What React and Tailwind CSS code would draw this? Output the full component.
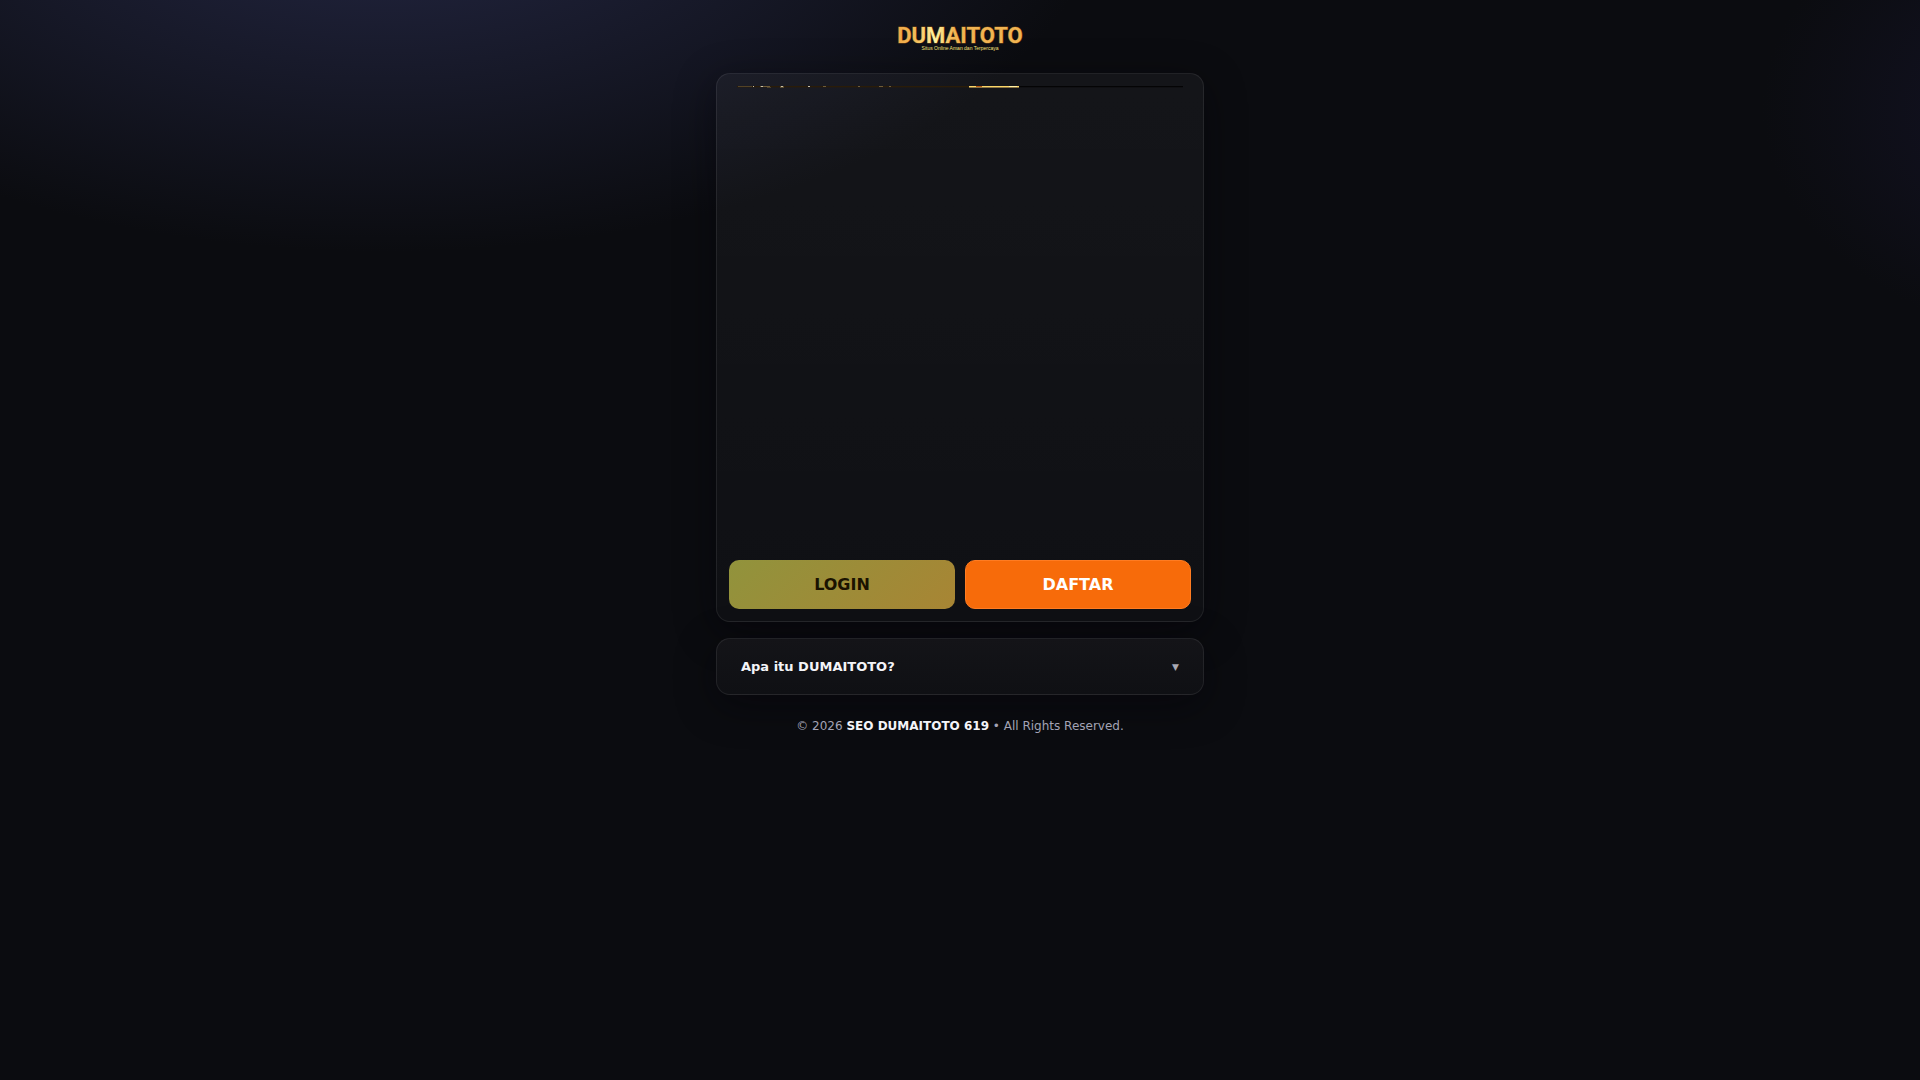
function Logo() {
  return (
    <svg viewBox="0 0 140 28" className="h-7 w-[140px]" role="img" aria-label="DUMAITOTO">
      <defs>
        <linearGradient id="gold" x1="0" x2="1" y1="0" y2="0">
          <stop offset="0" stopColor="#f0a848" />
          <stop offset="0.15" stopColor="#f3bd5a" />
          <stop offset="0.3" stopColor="#fff3a0" />
          <stop offset="0.45" stopColor="#f0b452" />
          <stop offset="1" stopColor="#f0b452" />
        </linearGradient>
      </defs>
      <text x="70" y="19" textAnchor="middle" fontFamily="Roboto, sans-serif" fontWeight="700" fontSize="22" fill="url(#gold)" stroke="#6b4213" strokeWidth="1" paintOrder="stroke">DUMAITOTO</text>
      <text x="70" y="26" textAnchor="middle" fontFamily="Liberation Sans, sans-serif" fontSize="5" fill="#f6e27a">Situs Online Aman dan Terpercaya</text>
    </svg>
  );
}

function BannerStrip() {
  return (
    <div className="aspect-square w-full px-2" aria-hidden="true">
      <svg viewBox="0 0 446 2" preserveAspectRatio="none" className="h-[2px] w-full">
        <rect width="234" height="1" fill="#2a1c08" />
        <rect width="234" y="1" height="1" fill="#2a1c08" opacity="0.35" />
        <rect x="234" width="212" height="1" fill="#040405" />
        <rect x="234" y="1" width="212" height="1" fill="#040405" opacity="0.25" />
        <g fill="#6f5c38">
          <rect x="1" width="14" height="1" opacity="0.6" />
          <rect x="23" width="10" height="1" />
          <rect x="30" y="1" width="4" height="1" opacity="0.6" />
          <rect x="43" width="4" height="2" opacity="0.7" />
          <rect x="86" width="3" height="1" />
          <rect x="121" width="2" height="1" />
          <rect x="142" width="4" height="1" />
          <rect x="152" width="2" height="1" />
        </g>
        <g fill="#c9c0aa">
          <rect x="16" width="1" height="1" />
          <rect x="24" width="2" height="1" />
          <rect x="44" width="2" height="1" />
          <rect x="71" width="2" height="1" />
        </g>
        <rect x="232" width="50" height="1" fill="#fbd668" />
        <rect x="232" y="1" width="50" height="1" fill="#8d7642" />
        <rect x="239" width="6" height="1" fill="#b85a12" />
        <rect x="272" width="8" height="1" fill="#fff0a8" />
      </svg>
    </div>
  );
}

export default function App() {
  return (
    <div className="min-h-screen bg-[#0b0c10] bg-[radial-gradient(1200px_600px_at_20%_-10%,#242744_0%,transparent_60%),radial-gradient(700px_480px_at_110%_10%,#151429_0%,transparent_50%)] font-['DejaVu_Sans',sans-serif] text-[#f4f4f8]">
      <div className="mx-auto max-w-[520px] px-4">
        <header className="flex justify-center pt-6 pb-[21px]">
          <a href="#" className="block"><Logo /></a>
        </header>
        <main>
          <section className="rounded-[14px] border border-white/[0.08] bg-linear-to-b from-white/[0.04] to-white/[0.02] p-3 shadow-[0_10px_40px_rgba(4,0,8,0.45)]">
            <BannerStrip />
            <div className="mt-3 grid grid-cols-2 gap-[10px] text-base font-bold">
              <button type="button" className="h-[49px] rounded-[10px] bg-[linear-gradient(135deg,#91933c,#a88534)] text-[#1a1200]">LOGIN</button>
              <button type="button" className="h-[49px] rounded-[10px] border border-[#ff7c22] bg-[#f76b0a] text-white">DAFTAR</button>
            </div>
          </section>
          <details className="mt-4 rounded-[14px] border border-white/[0.08] bg-linear-to-b from-[#141418] to-[#0f1014] shadow-[0_10px_40px_rgba(4,0,8,0.45)]">
            <summary className="flex cursor-pointer list-none items-center justify-between px-6 py-[18px] text-[13px] leading-[19px] font-bold">
              Apa itu DUMAITOTO?
              <span className="pt-0.5 text-[9px] leading-none font-normal text-[#a9a9b4]">▼</span>
            </summary>
          </details>
        </main>
        <footer className="pt-[21px] pb-6 text-center text-xs leading-5 text-[#a3a3b5]">
          © 2026 <strong className="text-[#f4f4f8]">SEO DUMAITOTO 619</strong> • All Rights Reserved.
        </footer>
      </div>
    </div>
  );
}
